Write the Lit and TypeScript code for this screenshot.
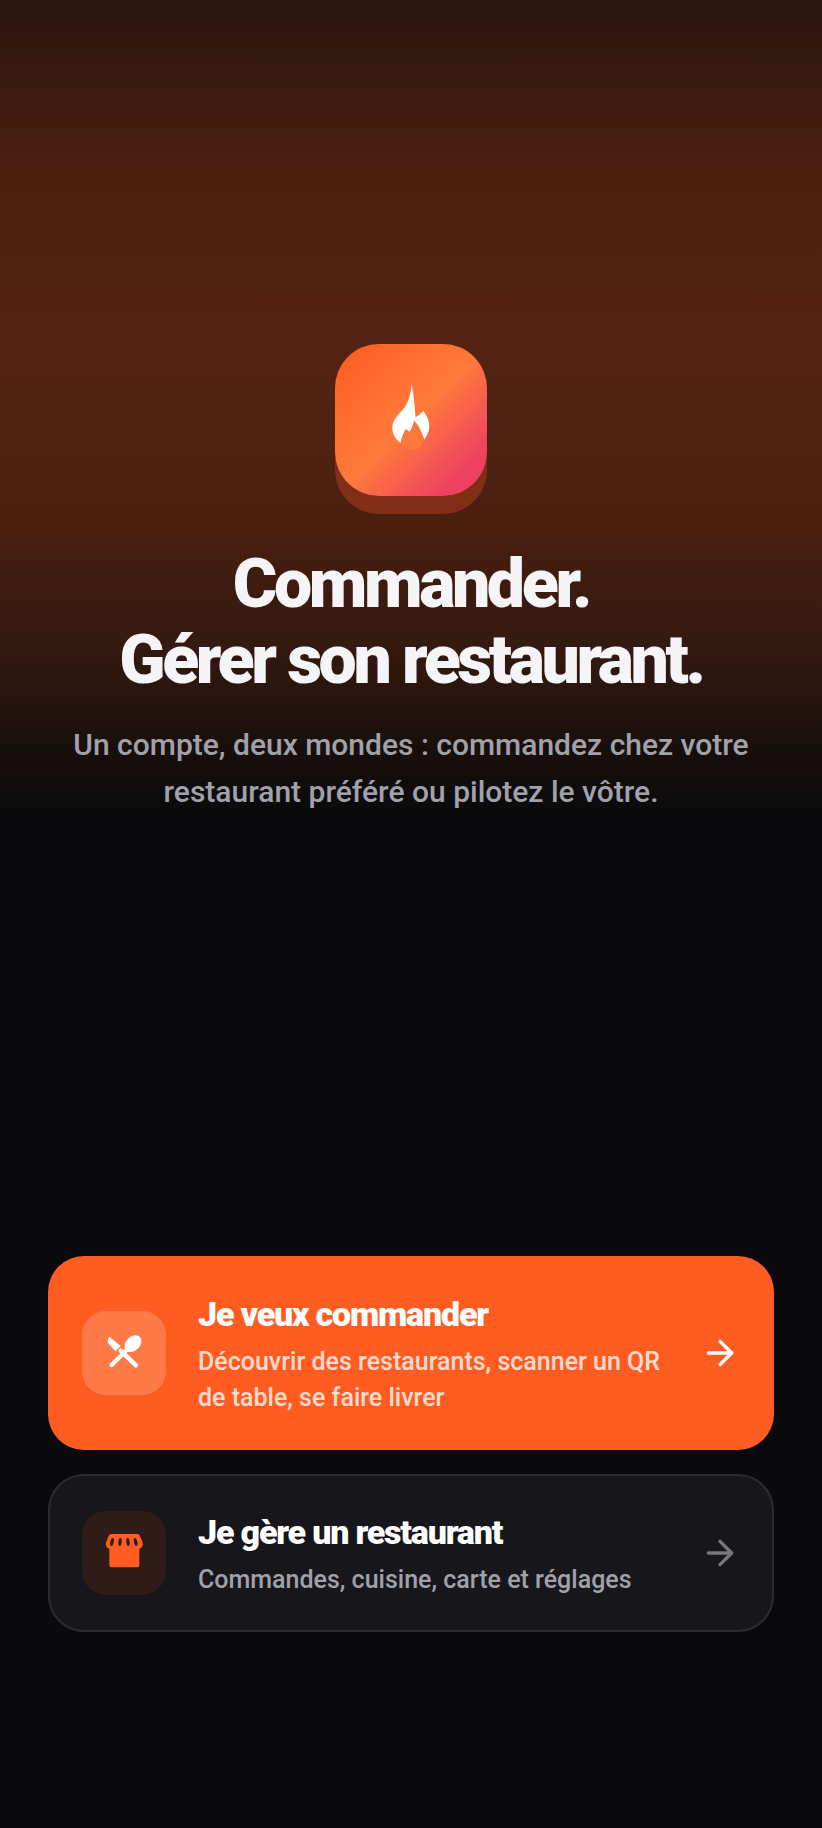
import { LitElement, html, css } from "lit";
import { customElement } from "lit/decorators.js";

const arrow = html`<svg class="arrow" viewBox="0 0 24 24" fill="none" stroke="currentColor" stroke-width="2" stroke-linecap="round" stroke-linejoin="round"><path d="M5 12h14"/><path d="M12 5l7 7-7 7"/></svg>`;

@customElement("app-root")
export class AppRoot extends LitElement {
  static styles = css`
    :host { display: block; }
    .page {
      min-height: 1828px; box-sizing: border-box; background: #0a0a0c;
      font-family: Roboto, sans-serif; display: flex; flex-direction: column; align-items: center;
      position: relative; overflow: hidden;
    }
    .glow {
      position: absolute; left: 0; right: 0; top: 0; height: 812px;
      background: linear-gradient(180deg, #2a150e 0%, #3d1c10 12%, #4a1e0f 20%, #532312 42%, #4a1f10 66%, #3e1c10 71%, #351a10 79%, #2a150e 85%, #1a100c 91%, #0a0a0c 100%);
    }
    .hero { position: relative; display: flex; flex-direction: column; align-items: center; padding: 344px 20px 0; }
    .logo {
      width: 152px; height: 152px; border-radius: 44px; display: flex; align-items: center; justify-content: center;
      background: linear-gradient(135deg, #ff5a1f 0%, #ff7a3a 50%, #ee4060 85%);
      box-shadow: 0 18px 0 #802f16;
    }
    .logo svg { width: 42px; height: 76.67px; }
    h1 {
      margin: 50px 0 0; font-size: 68px; line-height: 76px; font-weight: 900; letter-spacing: -3.4px;
      color: #f5f5f7; text-align: center;
    }
    .sub { margin: 24px 0 0; font-size: 30px; line-height: 46.5px; font-weight: 500; color: #a1a1aa; text-align: center; }
    .cards { position: relative; width: 726px; margin-top: 441px; display: flex; flex-direction: column; gap: 24px; }
    .card { display: flex; align-items: center; gap: 32px; border-radius: 36px; box-sizing: border-box; padding: 0 34px; }
    .primary { height: 194px; background: #ff5c21; color: #fff; }
    .secondary { height: 158px; background: #16161b; border: 2px solid #2b2b32; padding: 0 32px; color: #fff; }
    .box { flex: none; width: 84px; height: 84px; border-radius: 24px; display: flex; align-items: center; justify-content: center; }
    .primary .box { background: rgba(255,255,255,.18); }
    .secondary .box { background: #2f1c19; color: #ff5c21; }
    .box svg { width: 48px; height: 48px; }
    .text { flex: 1; min-width: 0; }
    .t { font-size: 34px; line-height: 46px; font-weight: 900; letter-spacing: -1.2px; }
    .d { margin-top: 7px; font-size: 25px; line-height: 36px; font-weight: 500; }
    .primary .d { color: rgba(255,255,255,.8); }
    .secondary .d { color: #a1a1aa; }
    .arrow { flex: none; width: 40px; height: 40px; }
    .secondary .arrow { color: #77777f; }
  `;

  render() {
    return html`<div class="page">
      <div class="glow"></div>
      <div class="hero">
        <div class="logo">
          <svg viewBox="240 185 126 230">
            <circle cx="307" cy="355" r="33" fill="#ff7a3a"/>
            <path fill="#fff" d="M305 190C312 225 314 262 317 290C325 285 334 280 340 272C350 285 358 300 358 318C358 332 351 346 343 358C338 342 330 320 312 300C310 315 304 328 298 335L288 325C280 338 274 352 272 368C258 358 247 342 247 322C247 298 268 280 283 262C295 245 303 220 305 190Z"/>
          </svg>
        </div>
        <h1>Commander.<br />Gérer son restaurant.</h1>
        <p class="sub">Un compte, deux mondes : commandez chez votre<br />restaurant préféré ou pilotez le vôtre.</p>
      </div>
      <div class="cards">
        <div class="card primary">
          <div class="box"><svg viewBox="0 3 144 144" fill="#fff">
            <path d="M28 26C22 34 22 44 30 52L46 70L62 54Z"/>
            <path d="M62 68L108 112" stroke="#fff" stroke-width="13" stroke-linecap="round"/>
            <path d="M35 111L84 62" stroke="#fff" stroke-width="13" stroke-linecap="round"/>
            <ellipse cx="99" cy="47" rx="29" ry="21" transform="rotate(-45 99 47)"/>
          </svg></div>
          <div class="text"><div class="t">Je veux commander</div><div class="d">Découvrir des restaurants, scanner un QR<br />de table, se faire livrer</div></div>
          ${arrow}
        </div>
        <div class="card secondary">
          <div class="box"><svg viewBox="0 3 144 144" fill="currentColor">
            <path d="M34 18H112Q118 18 120 24L128 44Q131 56 118 62V112Q118 118 112 118H34Q28 118 28 112V62Q15 56 18 44L26 24Q28 18 34 18Z"/>
            <g fill="#2f1c19">
              <ellipse cx="36" cy="42" rx="5" ry="12" transform="rotate(14 36 42)"/>
              <ellipse cx="60" cy="42" rx="5" ry="12" transform="rotate(6 60 42)"/>
              <ellipse cx="84" cy="42" rx="5" ry="12" transform="rotate(-6 84 42)"/>
              <ellipse cx="107" cy="42" rx="5" ry="12" transform="rotate(-14 107 42)"/>
            </g>
          </svg></div>
          <div class="text"><div class="t">Je gère un restaurant</div><div class="d">Commandes, cuisine, carte et réglages</div></div>
          ${arrow}
        </div>
      </div>
    </div>`;
  }
}
